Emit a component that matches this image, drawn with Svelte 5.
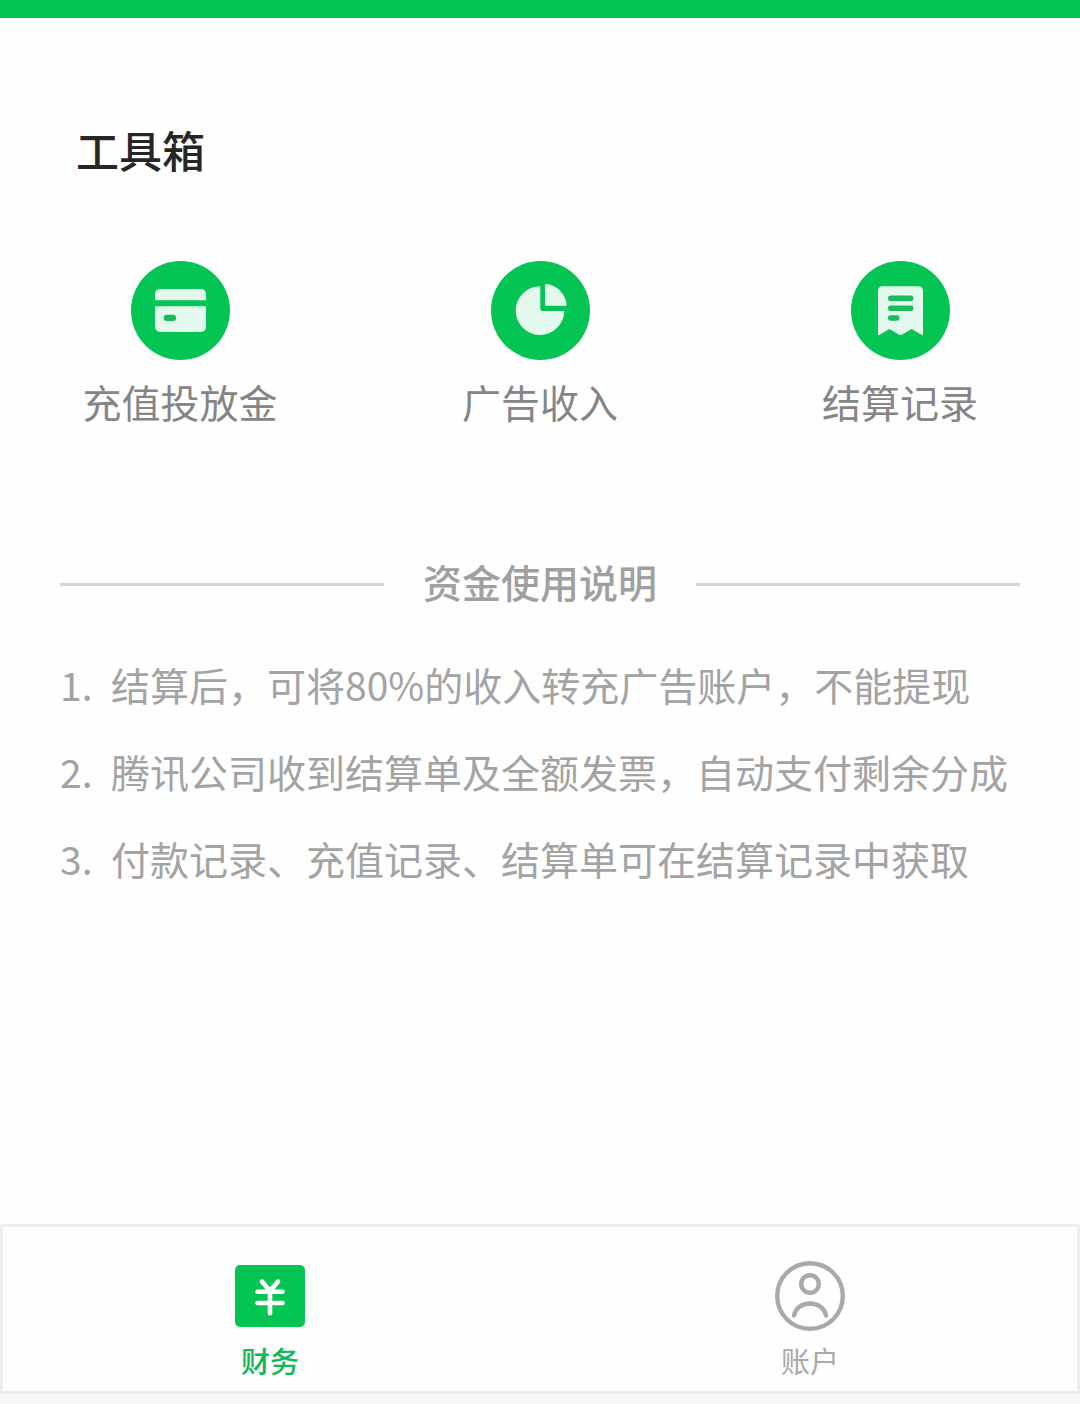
<script lang="ts">
	const tools = [
		{ icon: 'card', label: '充值投放金' },
		{ icon: 'pie', label: '广告收入' },
		{ icon: 'receipt', label: '结算记录' }
	];

	const notes = [
		'结算后，可将80%的收入转充广告账户，不能提现',
		'腾讯公司收到结算单及全额发票，自动支付剩余分成',
		'付款记录、充值记录、结算单可在结算记录中获取'
	];

	let tab = $state('finance');
</script>

<div class="page">
	<div class="topbar"></div>

	<main>
		<h1>工具箱</h1>

		<div class="tools">
			{#each tools as tool}
				<button class="tool">
					<svg viewBox="0 0 100 100" aria-hidden="true">
						<circle cx="50.5" cy="50.5" r="49.5" fill="#04c554" />
						{#if tool.icon === 'card'}
							<path d="M25 40.3V34a5 5 0 0 1 5-5h41a5 5 0 0 1 5 5v6.3z" fill="#e3f9ee" />
							<path d="M25 46.3h51V67a5 5 0 0 1-5 5H30a5 5 0 0 1-5-5z" fill="#e3f9ee" />
							<rect x="33.7" y="54.7" width="12.3" height="6.3" rx="3" fill="#1abb5b" />
						{:else if tool.icon === 'pie'}
							<path d="M50.3 26.3A24.3 24.3 0 1 0 74.3 51H52.3a2 2 0 0 1-2-2z" fill="#e3f9ee" />
							<path d="M55 25.2a1.2 1.2 0 0 1 1.4-1.2A23 23 0 0 1 76.6 44.4a1.2 1.2 0 0 1-1.2 1.4H56a1 1 0 0 1-1-1z" fill="#e3f9ee" />
						{:else}
							<path d="M28 30.8a4.5 4.5 0 0 1 4.5-4.5h36a4.5 4.5 0 0 1 4.5 4.5v43.5q0 1.3-1.2.7L61.7 69 51.8 74.7q-1.3.7-2.5 0L39.3 69 29.2 75q-1.2.6-1.2-.7z" fill="#e3f9ee" />
							<path d="M40.8 38.3h19.8M40.8 48.2h19.8M40.8 58h5.8" fill="none" stroke="#1abb5b" stroke-width="5.6" stroke-linecap="round" />
						{/if}
					</svg>
					<span>{tool.label}</span>
				</button>
			{/each}
		</div>

		<h2><span>资金使用说明</span></h2>

		<ol>
			{#each notes as note, i}
				<li><span class="num">{i + 1}.</span><span>{note}</span></li>
			{/each}
		</ol>
	</main>

	<nav>
		<button class="tab" class:active={tab === 'finance'} onclick={() => (tab = 'finance')}>
			<svg viewBox="0 0 70 70" aria-hidden="true">
				<rect y="4" width="70" height="62" rx="5" fill="currentColor" />
				<path d="M27 20.5 35 30l8-9.500M22.5 30.700h25M22.5 42h25M35 30v22.300" fill="none" stroke="#fff" stroke-width="4.6" stroke-linecap="round" stroke-linejoin="round" />
			</svg>
			<span>财务</span>
		</button>
		<button class="tab" class:active={tab === 'account'} onclick={() => (tab = 'account')}>
			<svg viewBox="0 0 70 70" fill="none" stroke="currentColor" stroke-width="4.4" aria-hidden="true">
				<circle cx="35" cy="35" r="32.800" />
				<circle cx="35" cy="23" r="8.800" />
				<path d="M19 54.5C20.500 47 27 42.500 35 42.500S49.500 47 51 54.500" stroke-linecap="round" />
			</svg>
			<span>账户</span>
		</button>
	</nav>
</div>

<style>
	:global(body) {
		margin: 0;
		background: #f7f7f7;
	}

	.page {
		display: flex;
		flex-direction: column;
		min-height: 100vh;
		box-sizing: border-box;
		padding-bottom: 10px;
		font-family: 'Noto Sans CJK SC', sans-serif;
	}

	.topbar {
		height: 18px;
		background: #04c554;
	}

	main {
		flex: 1;
		padding-top: 101px;
		background: #fefefe;
	}

	h1 {
		margin: 0 76px;
		font-size: 43px;
		font-weight: 500;
		line-height: 60px;
		color: #262626;
	}

	button {
		padding: 0;
		border: 0;
		background: none;
		font: inherit;
		cursor: pointer;
	}

	.tools {
		display: grid;
		grid-template-columns: repeat(3, 1fr);
		margin-top: 81px;
	}

	.tool {
		display: flex;
		flex-direction: column;
		align-items: center;
		gap: 11px;
		font-size: 39px;
		line-height: 60px;
		color: #858585;
	}

	.tool svg {
		width: 100px;
		height: 100px;
	}

	h2 {
		display: flex;
		align-items: center;
		gap: 39px;
		margin: 120px 60px 0;
		font-size: 39px;
		font-weight: 500;
		line-height: 60px;
		color: #a0a0a0;
	}

	h2 span {
		padding-bottom: 6px;
	}

	h2::before,
	h2::after {
		content: '';
		flex: 1;
		height: 3px;
		background: #d5d5d5;
	}

	ol {
		display: flex;
		flex-direction: column;
		gap: 27px;
		margin: 37px 60px 0;
		padding: 0;
		list-style: none;
		font-size: 39px;
		line-height: 60px;
		color: #a3a3a3;
	}

	li {
		display: flex;
	}

	.num {
		flex: none;
		width: 51px;
	}

	nav {
		display: flex;
		padding: 3px 0;
		background: #fefefe;
		box-shadow: inset 0 0 0 3px #eee;
	}

	.tab {
		flex: 1;
		display: flex;
		flex-direction: column;
		align-items: center;
		gap: 9px;
		padding: 34px 0 11px;
		font-size: 29px;
		line-height: 40px;
		color: #a9a9a9;
	}

	.tab svg {
		width: 70px;
		height: 70px;
	}

	.tab.active {
		color: #04c554;
	}

	.active span {
		font-weight: 500;
		color: #10b85c;
	}
</style>
